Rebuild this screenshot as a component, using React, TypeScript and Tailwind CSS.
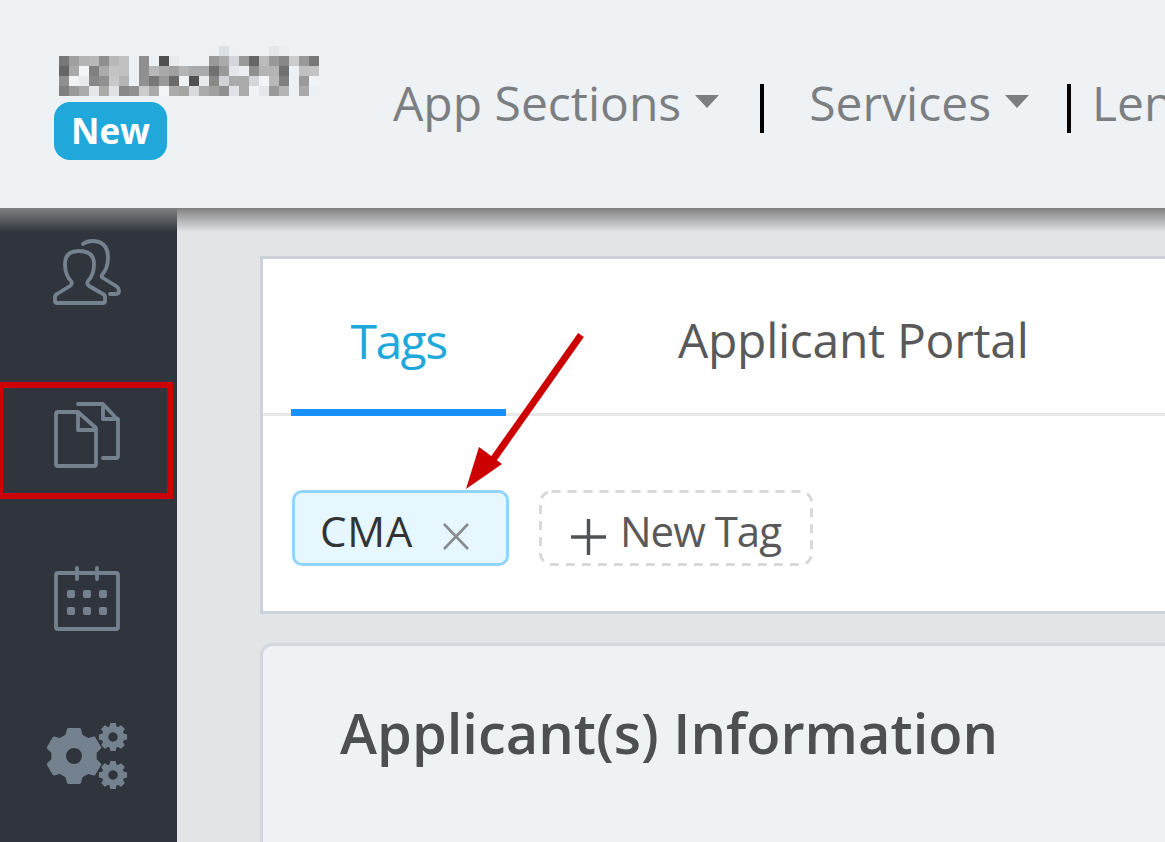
const logoRows = [
    ["#eff2f5", "#eff2f5", "#eff2f5", "#eff2f5", "#eff2f5", "#eff2f5", "#eff2f5", "#eff2f5", "#eff2f5", "#eff2f5", "#eff2f5", "#eff2f5", "#eff2f5", "#eff2f5", "#eff2f5", "#eef0f3", "#dde0e4", "#eef0f3", "#eff2f5", "#eff2f5", "#eff2f5", "#e4e6e9", "#eceef1", "#eff2f5", "#eff2f5", "#eff2f5"],
    ["#777777", "#a0a0a0", "#b4b4b4", "#b8b8b8", "#909090", "#b8b8b8", "#c0c0c0", "#eef1f4", "#909090", "#eef1f4", "#505050", "#e8eaec", "#eff2f5", "#eff2f5", "#eff2f5", "#999999", "#aaaaaa", "#d4d6d9", "#999999", "#666666", "#bbbbbb", "#999999", "#888888", "#cccccc", "#999999", "#777777"],
    ["#666666", "#aaaaaa", "#f4f5f6", "#808080", "#aaaaaa", "#c4c4c4", "#c0c0c0", "#eef1f4", "#909090", "#b8b8b8", "#aaaaaa", "#a0a0a0", "#b4b4b4", "#aaaaaa", "#aaaaaa", "#707070", "#999999", "#e4e6e9", "#ebedf0", "#909090", "#b4b4b4", "#b4b4b4", "#707070", "#eef1f4", "#c0c0c0", "#c4c4c4"],
    ["#909090", "#f0f2f4", "#e8eaec", "#888888", "#909090", "#c8c8c8", "#b4b4b4", "#eef1f4", "#909090", "#777777", "#999999", "#6a6a6a", "#eef1f4", "#505050", "#e8eaec", "#888888", "#d0d2d5", "#aaaaaa", "#aaaaaa", "#d4d6d9", "#f2f4f6", "#b8b8b8", "#808080", "#eef1f4", "#999999", "#f0f2f4"],
    ["#808080", "#999999", "#aaaaaa", "#e4e6e9", "#aaaaaa", "#e0e2e5", "#888888", "#909090", "#cccccc", "#aaaaaa", "#f4f5f6", "#aaaaaa", "#a4a4a4", "#d8dadd", "#aaaaaa", "#a0a0a0", "#909090", "#e0e2e5", "#aaaaaa", "#f0f2f4", "#e4e6e9", "#999999", "#b4b4b4", "#eef1f4", "#aaaaaa", "#eef1f4"],
];

const PixelLogo = () => (
    <svg width="260" height="50" viewBox="0 0 260 50" className="ml-[5px] block" shapeRendering="crispEdges">
        {logoRows.map((row, y) =>
            row.map((fill, x) => <rect key={`${x}-${y}`} x={x * 10} y={y * 10} width="10" height="10" fill={fill} />)
        )}
    </svg>
);

// gear outline from polar points, rounded off by the stroke join
const gearPath = (cx: number, cy: number, outer: number, inner: number, hole: number, teeth: number) => {
    const points: string[] = [];
    const step = (Math.PI * 2) / teeth;
    for (let i = 0; i < teeth; i++) {
        const a = -Math.PI / 2 + i * step;
        const corners: [number, number][] = [
            [a - step * 0.33, inner],
            [a - step * 0.2, outer],
            [a + step * 0.2, outer],
            [a + step * 0.33, inner],
        ];
        corners.forEach(([angle, r]) => {
            points.push(`${(cx + Math.cos(angle) * r).toFixed(2)} ${(cy + Math.sin(angle) * r).toFixed(2)}`);
        });
    }
    const circle = `M${cx - hole} ${cy}a${hole} ${hole} 0 1 0 ${hole * 2} 0a${hole} ${hole} 0 1 0 ${-hole * 2} 0Z`;
    return `M${points.join("L")}Z${circle}`;
};

const iconStroke = "#74818e";

const UsersIcon = () => (
    <svg width="70" height="68" viewBox="52 238 70 68" fill="none" stroke={iconStroke} strokeWidth="3.8" strokeLinecap="round" strokeLinejoin="round">
        <path d="M57 303H103Q105 303 105 301V297Q105 295 103 294L89 286Q86 284 88 281Q94 275 94 264Q94 251 79 251Q65 251 65 264Q65 275 71 281Q73 284 70 286L57 294Q55 295 55 297V301Q55 303 57 303Z" />
        <path d="M83 244Q87 241 92 241Q108 241 108 258Q108 268 102 275Q101 277 103 278L116 286Q119 288 119 291Q119 294 116 294H110" />
    </svg>
);

const DocsIcon = () => (
    <svg width="70" height="68" viewBox="52 402 70 68" fill="none" stroke={iconStroke} strokeWidth="3.8" strokeLinecap="round" strokeLinejoin="round">
        <path d="M78 412H58Q56 412 56 414V464Q56 466 58 466H94Q96 466 96 464V428L78 412V430H96" />
        <path d="M78 404H103L118 420V456Q118 458 116 458H103" />
        <path d="M103 405V419H118" />
    </svg>
);

const CalendarIcon = () => (
    <svg width="70" height="68" viewBox="52 565 70 68" fill="none" stroke={iconStroke} strokeWidth="3.8" strokeLinecap="round" strokeLinejoin="round">
        <rect x="56" y="573" width="62" height="56" rx="2" />
        <path d="M77 568V579M97 568V579" />
        {[71, 87, 103].map((x) =>
            [594, 611].map((y) => <rect key={`${x}-${y}`} x={x - 4} y={y - 4} width="8" height="8" rx="2" fill={iconStroke} stroke="none" />)
        )}
    </svg>
);

const GearsIcon = () => (
    <svg width="86" height="70" viewBox="44 722 86 70" fill={iconStroke} stroke={iconStroke} strokeLinejoin="round" fillRule="evenodd">
        <path d={gearPath(74, 756, 27, 21.5, 9.5, 6)} strokeWidth="3" />
        <path d={gearPath(113, 737, 13.5, 10.5, 5.5, 8)} strokeWidth="1.5" />
        <path d={gearPath(113, 775, 13.5, 10.5, 5.5, 8)} strokeWidth="1.5" />
    </svg>
);

const NavItem = ({ label, caret }: { label: string; caret?: boolean }) => (
    <div className="flex items-center">
        <span>{label}</span>
        {caret && (
            <span className="ml-[14px] mt-[-3px] h-0 w-0 border-x-[12.5px] border-t-[13px] border-x-transparent border-t-[#7b7f82]" />
        )}
    </div>
);

const Divider = () => <div className="h-[49px] w-[4px] shrink-0 bg-black" />;

const Header = () => (
    <header className="relative z-10 flex h-[208px] shrink-0 bg-[#eff2f5] pl-[54px]">
        <div className="w-[339px] shrink-0 pt-[46px]">
            <PixelLogo />
            <div className="mt-[6px] flex h-[58px] w-[113px] items-center justify-center rounded-[16px] bg-[#20a8da] text-[35px] font-bold text-white">
                New
            </div>
        </div>
        <nav className="flex flex-nowrap items-center whitespace-nowrap pb-[2px] text-[48px] text-[#7b7f82]">
            <NavItem label="App Sections" caret />
            <div className="ml-[41px] mr-[45px] mt-[11px]"><Divider /></div>
            <NavItem label="Services" caret />
            <div className="ml-[38px] mr-[21px] mt-[11px]"><Divider /></div>
            <NavItem label="Lending" />
        </nav>
        <div className="absolute inset-x-0 top-full h-[24px] bg-linear-to-b from-[#808080] to-transparent" />
    </header>
);

const Sidebar = () => (
    <aside className="relative flex w-[177px] shrink-0 flex-col items-start bg-[#30353d] pl-[52px] pt-[30px]">
        <UsersIcon />
        <div className="mt-[96px]"><DocsIcon /></div>
        <div className="mt-[95px]"><CalendarIcon /></div>
        <div className="ml-[-8px] mt-[89px]"><GearsIcon /></div>
        <div className="absolute left-0 top-[174px] h-[117px] w-[173px] border-[6px] border-l-[3px] border-[#cc0000]" />
    </aside>
);

const TagsCard = () => (
    <section className="w-[1000px] border-[3px] border-[#ccd1da] bg-white">
        <div className="flex h-[157px] border-b-[3px] border-[#e8e8e8] pl-[28px]">
            <div className="mb-[-3px] flex h-[157px] w-[215px] items-center justify-center border-b-[7px] border-[#1890ff] pt-[13px] text-[#20a8da]">
                <span className="text-[48px] tracking-[-1.5px]">Tags</span>
            </div>
            <div className="ml-[172px] flex h-[157px] items-center pt-[4px] text-[48px] tracking-[-0.3px] text-[#595959]">
                Applicant Portal
            </div>
        </div>
        <div className="flex h-[195px] items-start gap-[30px] pl-[29px] pt-[74px]">
            <div className="flex h-[76px] w-[217px] items-center rounded-[10px] border-[3px] border-[#91d5ff] bg-[#e6f7ff] pl-[25px] text-[42px] tracking-[0.8px] text-[#333333]">
                <span className="pt-[5px]">CMA</span>
                <svg width="26" height="27" viewBox="0 0 26 27" className="ml-[30px] mt-[17px]" stroke="#888c90" strokeWidth="2.6">
                    <path d="M1 1L25 26M25 1L1 26" />
                </svg>
            </div>
            <div className="relative flex h-[76px] w-[274px] items-center pl-[32px] text-[42px] tracking-[-1px] text-[#595959]">
                <svg className="absolute inset-0" width="274" height="76" viewBox="0 0 274 76" fill="none" stroke="#d9d9d9" strokeWidth="3" strokeDasharray="9 7">
                    <rect x="1.5" y="1.5" width="271" height="73" rx="11" />
                </svg>
                <svg width="36" height="36" viewBox="0 0 36 36" className="mt-[18px]" stroke="#4f5256" strokeWidth="3.4">
                    <path d="M0 18H35M17.5 0V36" />
                </svg>
                <span className="ml-[13px] pt-[5px]">New Tag</span>
            </div>
        </div>
    </section>
);

const ApplicantCard = () => (
    <section className="mt-[29px] h-[300px] w-[1000px] rounded-tl-[12px] border-[3px] border-[#d3d7dd] bg-[#eff2f5] pl-[77px] pt-[52px]">
        <h1 className="text-[56px] font-semibold leading-[68px] text-[#4d4f53]">Applicant(s) Information</h1>
    </section>
);

const Arrow = () => (
    <svg className="absolute left-[450px] top-[325px] z-20" width="145" height="175" viewBox="450 325 145 175">
        <path d="M581 335L490 464" stroke="#cc0000" strokeWidth="7" />
        <path d="M466 489L479 447L502 464Z" fill="#cc0000" />
    </svg>
);

export default function App() {
    return (
        <div className="relative flex h-[842px] w-[1165px] flex-col overflow-hidden bg-[#e3e4e6] font-['Open_Sans',sans-serif]">
            <Header />
            <div className="flex min-h-0 flex-1">
                <Sidebar />
                <main className="min-w-0 flex-1 overflow-hidden pl-[83px] pt-[48px]">
                    <TagsCard />
                    <ApplicantCard />
                </main>
            </div>
            <Arrow />
        </div>
    );
}
